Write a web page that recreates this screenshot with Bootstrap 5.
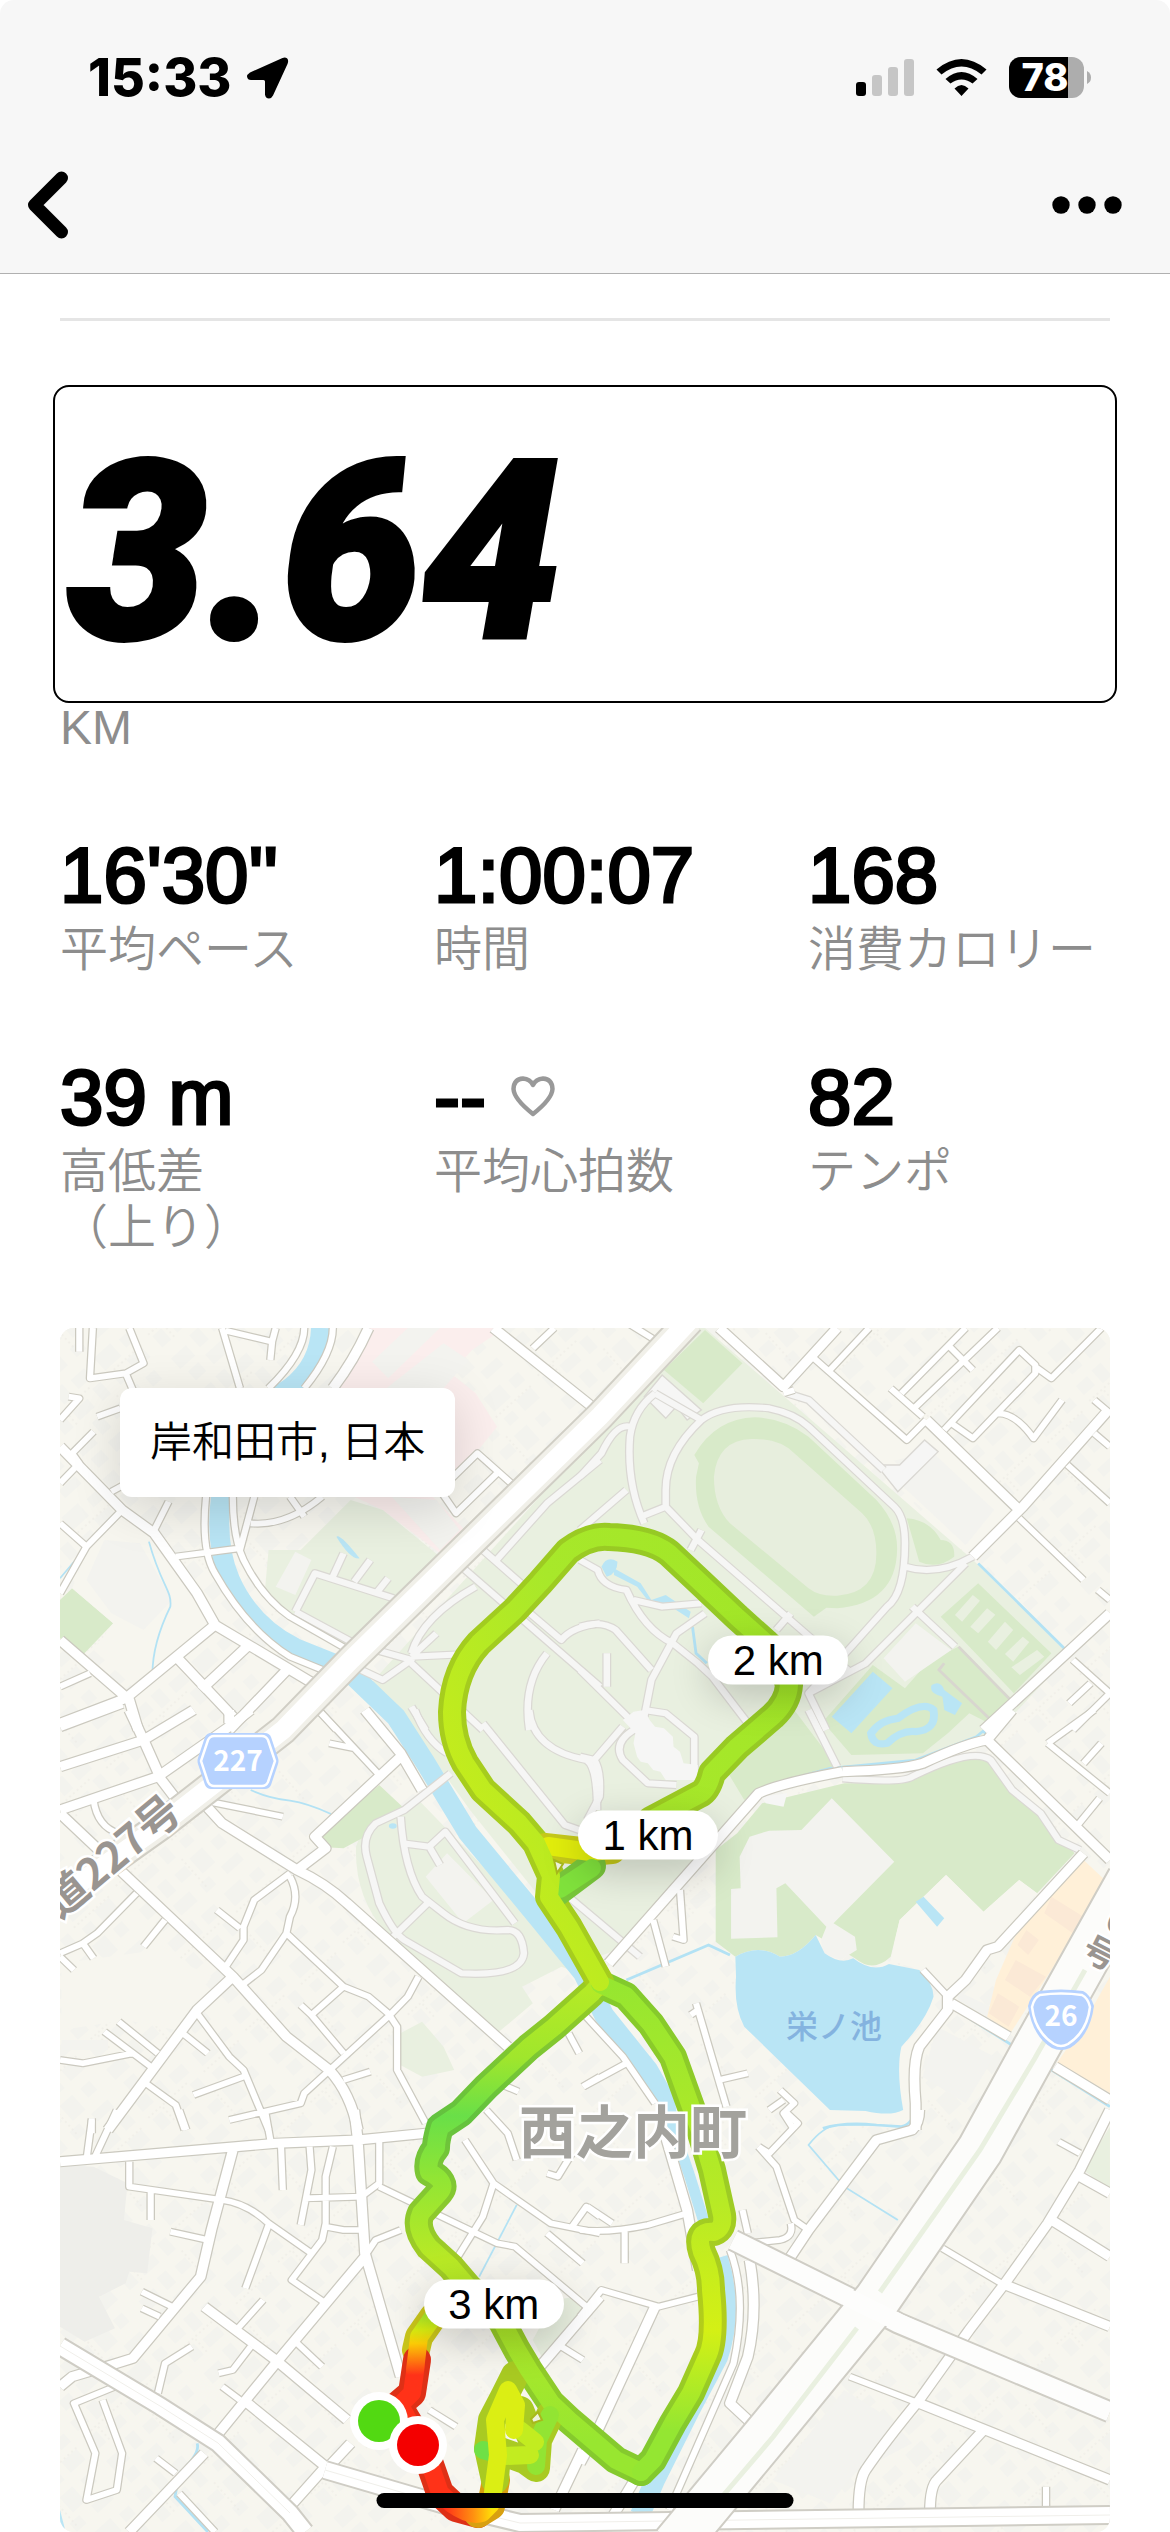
<!DOCTYPE html>
<html lang="ja">
<head>
<meta charset="utf-8">
<meta name="viewport" content="width=device-width, initial-scale=1">
<title>3.64 KM</title>
<link rel="stylesheet" href="https://cdn.jsdelivr.net/npm/bootstrap@5.3.0/dist/css/bootstrap.min.css">
<style>
  body { font-family: "Liberation Sans", "Noto Sans CJK JP", sans-serif; color: #000; background: #fff; }
  svg { display: block; }
  .app-header { background: #f7f7f7; border-bottom: 1px solid #b0b0b0; border-radius: 14px 14px 0 0; }
  .status-bar { padding: 50px 78px 31px 88px; font-family: Inter, sans-serif; font-weight: 800; }
  .clock { font-size: 52px; line-height: 56px; }
  .toolbar { height: 136px; padding: 0 47px 0 24px; }
  .tool-btn { border: 0; background: none; color: #000; padding: 0; }
  .sheet { padding: 44px 60px 0; }
  .rule { height: 3px; background: #e5e5e5; margin-bottom: 64px; }
  .distance-box { margin: 0 -7px; border: 2px solid #000; border-radius: 16px; padding: 18px 12px 0; }
  .distance { font-family: Roboto, sans-serif; font-weight: 900; font-style: italic; font-size: 250px; line-height: 296px; -webkit-text-stroke: 4px #000; }
  .unit { font-size: 48px; line-height: 50px; margin-bottom: 78px; color: #8d8d8d; }
  .stats { --bs-gutter-x: 72px; --bs-gutter-y: 0; row-gap: 75px; margin-bottom: 72px; }
  .value { font-size: 78px; line-height: 88px; margin-bottom: 3px; -webkit-text-stroke: 3px #000; }
  .caption { font-size: 48px; line-height: 56px; font-weight: 350; color: #8d8d8d; }
  .map { border-radius: 14px; overflow: hidden; background: #f7f6ef; }
  .place { left: 60px; top: 60px; background: #fff; border-radius: 12px; padding: 0 30px; font-size: 42px; line-height: 109px; font-weight: 350; box-shadow: 0 12px 50px rgba(0,0,0,.14); }
  .km-pin { width: 140px; border-radius: 25px; background: #fff; font-size: 42px; line-height: 49px; text-align: center; transform: translate(-50%,-50%); box-shadow: 0 12px 40px rgba(0,0,0,.2); }
  .pin-1 { left: 56%; top: 42.1%; }
  .pin-2 { left: 68.4%; top: 27.6%; }
  .pin-3 { left: 41.3%; top: 81.1%; }
  .home-bar { width: 36%; max-width: 417px; height: 15px; bottom: 24px; border-radius: 8px; background: #000; }

  .casing { --road: #cbc9bf; --walk: #dad8d3; --minor-w: 24px; --medium-w: 34px; --walk-w: 25px; }
  .surface { --road: #fff; --walk: #f6f6f5; --minor-w: 17px; --medium-w: 27px; --walk-w: 18px; }
  .tile path { fill: none; stroke-linejoin: round; }
  .tile .minor { stroke: var(--road); stroke-width: var(--minor-w); }
  .tile .medium { stroke: var(--road); stroke-width: var(--medium-w); }
  .tile .walk { stroke: var(--walk); stroke-width: var(--walk-w); }
  .park { fill: #e9f0e0; }
  .field { fill: #d8eac9; }
  .lake { fill: #b9e5f5; }
  .block { fill: #f3f3ef; }
  .stream { fill: none; stroke: #b3e2f4; stroke-width: 5px; }
  .canal { stroke-width: 8px; }
  .run { fill: none; stroke-linecap: round; stroke-linejoin: round; }
  .edge { stroke-width: 28px; }
  .core { stroke-width: 18px; }
  .map text { font-family: "Noto Sans CJK JP", sans-serif; font-weight: 700; text-anchor: middle; paint-order: stroke; }
  .map .lake-name { font-weight: 500; }
</style>
<script src="https://cdn.jsdelivr.net/npm/bootstrap@5.3.0/dist/js/bootstrap.bundle.min.js"></script>
</head>
<body>
<header class="app-header">
  <div class="status-bar d-flex align-items-center justify-content-between">
    <div class="d-flex align-items-center">
      <span class="clock">15:33</span>
      <svg class="ms-3" width="42" height="42" viewBox="0 0 42 42" aria-hidden="true"><path d="M35.500 1L3 15.500Q0 17.500 0 19.500Q.5 23 4 23H16.500Q18 23 18 24.500V37.500Q18.500 41.500 22 41.500Q24.500 41.500 26 38.500L40.500 7Q42 3 40 1.200Q38 -.2 35.500 1Z"/></svg>
    </div>
    <div class="d-flex align-items-center">
      <svg width="236" height="42" viewBox="856 57 236 42" role="img" aria-label="電波 Wi-Fi バッテリー 78%">
        <g fill="#c6c6c6"><rect x="872" y="75" width="10" height="21" rx="3"/><rect x="888" y="67" width="10" height="29" rx="3"/><rect x="904" y="59" width="10" height="37" rx="3"/></g>
        <rect x="856" y="82" width="10" height="14" rx="3"/>
        <path d="M936.500 69.500Q961.500 48.500 986.500 69.500L981.500 74.500Q961.500 58.500 941.500 74.500ZM945.500 79Q961.500 65 977.500 79L972.500 83.500Q961.500 75.500 950.500 83.500ZM954.500 88.500Q961.500 81.500 968.500 88.500L961.500 96Z"/>
        <rect x="1009" y="57" width="75" height="41" rx="12" fill="#adadad"/>
        <path d="M1068 57h-47a12 12 0 0 0-12 12v17a12 12 0 0 0 12 12h47z"/>
        <path d="M1087 71Q1091 73 1091 77.500T1087 84Z" fill="#adadad"/>
        <text x="1045" y="91" font-size="38" font-weight="800" fill="#fff" text-anchor="middle">78</text>
      </svg>
    </div>
  </div>
  <nav class="toolbar d-flex align-items-center justify-content-between">
    <button class="tool-btn" type="button" aria-label="戻る"><svg width="48" height="70" viewBox="0 0 48 70"><path d="M37.500 8L10.500 35L37.500 62" fill="none" stroke="#000" stroke-width="13" stroke-linecap="round" stroke-linejoin="round"/></svg></button>
    <button class="tool-btn" type="button" aria-label="メニュー"><svg width="72" height="20" viewBox="0 0 72 20"><circle cx="10" cy="10" r="8.700"/><circle cx="36" cy="10" r="8.700"/><circle cx="62" cy="10" r="8.700"/></svg></button>
  </nav>
</header>

<main class="sheet">
  <div class="rule"></div>
  <div class="distance-box"><div class="distance">3.64</div></div>
  <div class="unit">KM</div>

  <div class="row stats">
    <div class="col-4"><div class="value">16'30''</div><div class="caption">平均ペース</div></div>
    <div class="col-4"><div class="value">1:00:07</div><div class="caption">時間</div></div>
    <div class="col-4"><div class="value">168</div><div class="caption text-nowrap">消費カロリー</div></div>
    <div class="col-4"><div class="value">39 m</div><div class="caption">高低差<br>（上り）</div></div>
    <div class="col-4">
      <div class="value d-flex align-items-center">--<svg class="ms-4" width="46" height="44" viewBox="0 0 46 44" aria-hidden="true"><path d="M23 39Q4 24 3.500 14Q4 4 13 3.500Q20 4 23 10Q26 4 33 3.500Q42 4 42.500 14Q42 24 23 39Z" fill="none" stroke="#999" stroke-width="4.500" stroke-linejoin="round"/></svg></div>
      <div class="caption">平均心拍数</div>
    </div>
    <div class="col-4"><div class="value">82</div><div class="caption">テンポ</div></div>
  </div>

  <div class="map position-relative">
    <svg viewBox="60 1328 1050 1204" width="100%" role="img" aria-label="ルートマップ">
      <defs>
        <pattern id="houses" width="131" height="97" patternUnits="userSpaceOnUse" patternTransform="rotate(-42)">
          <path d="M3 4h15v12h-15zM25 3h12v17h-12zM46 6h18v12h-18zM5 28h12v15h-12zM26 31h20v11h-20zM56 27h11v16h-11zM78 5h22v17h-22zM109 8h13v11h-13zM80 33h12v10h-12zM101 28h20v14h-20zM4 57h20v14h-20zM33 52h12v16h-12zM54 55h14v11h-14zM76 53h17v20h-17zM103 54h12v12h-12zM8 78h14v12h-14zM32 77h22v13h-22zM66 79h13v11h-13zM94 80h22v10h-22z" fill="#f3f3ee"/>
          <path d="M3 24h55M21 26v18M70 48v40M75 27h50" stroke="#eceae4" stroke-dasharray="2 3"/>
        </pattern>
        <linearGradient id="g-loop" gradientUnits="userSpaceOnUse" x1="440" y1="1760" x2="760" y2="1600"><stop offset="0" stop-color="#c4ec1c"/><stop offset=".5" stop-color="#a8e82a"/><stop offset="1" stop-color="#a2e628"/></linearGradient>
        <linearGradient id="g-loop-e" gradientUnits="userSpaceOnUse" x1="440" y1="1760" x2="760" y2="1600"><stop offset="0" stop-color="#a8cd1d"/><stop offset="1" stop-color="#92c926"/></linearGradient>
        <linearGradient id="g-west" gradientUnits="userSpaceOnUse" x1="0" y1="1990" x2="0" y2="2440"><stop offset="0" stop-color="#b4ea26"/><stop offset=".15" stop-color="#a0e62c"/><stop offset=".28" stop-color="#69df48"/><stop offset=".42" stop-color="#92e534"/><stop offset=".6" stop-color="#b9e925"/><stop offset="1" stop-color="#98e630"/></linearGradient>
        <linearGradient id="g-west-e" gradientUnits="userSpaceOnUse" x1="0" y1="1990" x2="0" y2="2440"><stop offset="0" stop-color="#99cb24"/><stop offset=".28" stop-color="#62c23f"/><stop offset=".6" stop-color="#a2cc24"/><stop offset="1" stop-color="#85ca2d"/></linearGradient>
        <linearGradient id="g-east" gradientUnits="userSpaceOnUse" x1="0" y1="1980" x2="0" y2="2480"><stop offset="0" stop-color="#96e630"/><stop offset=".45" stop-color="#b8ea25"/><stop offset=".7" stop-color="#d4f015"/><stop offset=".9" stop-color="#94e632"/><stop offset="1" stop-color="#94e632"/></linearGradient>
        <linearGradient id="g-east-e" gradientUnits="userSpaceOnUse" x1="0" y1="1980" x2="0" y2="2480"><stop offset="0" stop-color="#82ca2c"/><stop offset=".45" stop-color="#9fcc24"/><stop offset=".7" stop-color="#b4cd1a"/><stop offset=".9" stop-color="#82c92e"/></linearGradient>
        <linearGradient id="g-hot" gradientUnits="userSpaceOnUse" x1="0" y1="2305" x2="0" y2="2375"><stop offset="0" stop-color="#86e339"/><stop offset=".35" stop-color="#d8ef12"/><stop offset=".55" stop-color="#ffcf06"/><stop offset="1" stop-color="#ff3218"/></linearGradient>
        <linearGradient id="g-foot" gradientUnits="userSpaceOnUse" x1="445" y1="0" x2="492" y2="0"><stop offset="0" stop-color="#ff3218"/><stop offset=".6" stop-color="#ff9010"/><stop offset="1" stop-color="#ffdd08"/></linearGradient>

        <g id="roads" class="tile">
          <g transform="translate(40 1310) scale(.3571 .3333)">
            <path class="minor" d="M110 54V125M148 54L140 205L240 190L290 160L250 54M240 190L260 240M510 54L560 235M520 62L650 95L660 54M650 95L645 150M740 54Q740 130 640 235M820 54Q820 130 740 235M56 330L110 265L80 260M160 320L225 295M56 520L110 460L90 430L150 365M200 545L260 510M230 600L130 710L56 850M56 640L130 710M320 660L360 575M380 740L560 715M465 560Q450 720 490 790Q580 960 700 1040L860 1110M540 560Q540 680 570 750Q620 860 700 920L880 1030M590 640Q690 650 790 560M600 560L560 720M700 560L740 620M56 1130L140 1090M1330 530L1225 430L1120 540L1165 610L1280 490M770 1190L830 1260M1380 115L1440 54"/>
            <path class="medium" d="M920 54Q880 150 820 235M56 410L230 600L320 670L440 850L490 945L780 1130M490 945L240 1165L56 1240M56 990L250 1170L275 1260M390 1050L540 1220M590 1000L450 1140M700 1070L530 1260M1270 54L1540 285"/>
          </g>
          <g transform="translate(580 1310) scale(.3571 .3333)">
            <path class="minor" d="M600 240L570 250M650 140L915 390L970 330M700 180L810 54M870 235L960 320M900 250L1080 54M940 290L1170 54M1035 110L1100 180M1020 360L1230 120L1275 165V190L1100 385L1040 340M1275 170L1320 205L1460 54M1170 310Q1220 310 1270 385L1350 270M1440 270L1484 310M1230 625L1410 810M1365 465L1484 580M1440 370L1484 410M1450 840L1484 870M1380 1050L1484 1150M1370 1180L1430 1120M1484 1150L1380 1260M120 30L210 90"/>
            <path class="medium" d="M390 54L570 230L720 54M970 330L1230 600M1100 740L1240 590L1480 300M1130 1260L1484 910"/>
          </g>
          <g transform="translate(40 1710) scale(.3571 .3333)">
            <path class="minor" d="M150 270Q160 350 220 370M780 0L950 195M810 100L880 115M450 270L680 320M56 730L120 700L160 670L270 550M120 700L150 745M56 740L95 780M350 630L290 710M700 490L600 570L570 650V690L520 770M495 600L560 655M700 500Q730 560 700 620L690 670L620 780L560 830M690 670L850 830L920 860L975 910L1000 950V1080L1080 1240M850 830L760 915L730 885M760 915L850 1030M1060 800L1030 860L980 915L740 1150L730 1180L530 1230M850 1110L925 1085M440 910L530 1040L570 1080L640 1260M430 1155L570 1100M400 970L470 1030M220 935L330 1030M180 965L310 1070M56 1050L120 1060L260 1030M290 1115L380 1185L405 1260M145 1225V1270M1480 970L1510 1030M1520 1130L1568 1100M1240 1100L1340 1145"/>
            <path class="medium" d="M56 50L230 -20M56 170L290 90L430 0M56 300L330 200L530 50L590 0M250 0L290 90L340 210L390 280M530 0V40M910 0L1010 130L1070 240M1010 140L770 380L800 415L720 480M450 270L510 340L720 480Q800 520 860 580L1310 1010M56 310L540 800L690 980L810 1080Q870 1150 890 1260M540 800L440 900L190 1260"/>
          </g>
          <g transform="translate(580 1710) scale(.3571 .3333)">
            <path class="minor" d="M1410 160L1460 100M1310 100L1440 0M1310 100L1484 250M1390 350L1455 265M960 780L1030 860M280 540L290 690L260 680M205 630L240 770M325 880L410 1190M310 915L330 900M390 1110L470 1090M0 900L120 1040L210 1180M10 1130L130 1060M560 1140L600 1180L570 1210L600 1260M530 1200L570 1170"/>
            <path class="medium" d="M735 185Q900 180 960 160Q1080 100 1140 90L1210 0M735 185Q560 220 500 250L80 760M1140 90L1484 450M1410 430L1170 710L1140 720L1080 810L1030 860V900L950 1010Q930 1060 940 1180V1260M1040 880L1200 980M1330 1070L1484 1170"/>
          </g>
          <g transform="translate(40 2110) scale(.3571 .3333)">
            <path class="minor" d="M145 30L130 150M150 150L215 0M250 155V230L510 270Q580 280 640 340L760 430M310 240V330M365 365L470 390M640 345L575 535M285 545L370 590M285 595L335 620M675 110L680 240M755 110L760 180L730 345M820 110L800 200V340L790 390L705 510L800 580M800 350L850 360H900M740 265L900 260L950 220V90M950 230L1280 400L1330 410L1530 590M1190 90L1270 220L1430 340L1568 370M1270 220L1240 320L1170 440M1010 360L940 390L915 430M550 660L625 570M720 700L790 770M590 710L540 780L500 790M510 830L560 870M425 710L350 760L330 850M210 830L95 880L155 1030L130 1170L215 1140L230 1030L175 870M325 1045L380 1090M390 1150L490 1266M1090 900L1165 950M1460 710L1520 750M1420 370L1520 460M630 0L645 90M390 0L410 60M1420 190L1450 200L1490 130M1250 0L1310 70L1335 150M1490 350L1530 290L1568 320"/>
            <path class="medium" d="M56 155L660 100L890 90L1080 70M880 0L890 90L910 430L1010 800M540 120L480 360L450 500L380 590L260 745L200 765L90 800L56 830M910 440L660 760L500 970M460 590L660 750L860 930M570 870L800 1070L700 1190M870 1000L800 1080M460 1030L250 1266M1400 770L1568 560M1520 1020L1440 1200"/>
          </g>
          <g transform="translate(580 2110) scale(.3571 .3333)">
            <path class="minor" d="M0 360Q80 370 190 345L300 310M125 350V460M0 620L60 540L220 590L330 560M20 290L90 340M500 110L530 130L610 40L570 0M590 340Q600 380 560 390L470 400M455 300L470 370M500 110L550 170L600 330L640 360M1340 95L1400 130M1015 415L1180 520M755 800L950 880M1305 1130V1195M420 420Q470 560 430 760L250 1200"/>
            <path class="medium" d="M240 80L300 300L330 480M210 590L50 960L0 1060M590 440L640 360L830 90L930 60Q950 40 950 0M475 450Q500 600 470 740L420 880L480 940M950 880L1484 1110M1484 0L1400 180L1310 340L1190 520L1090 660L950 870Q850 1000 800 1080Q780 1110 780 1210M1400 200L1484 250M1320 330L1484 440M1180 520L1484 650M1130 960L1000 1110Q980 1130 980 1210M80 1240L170 1080"/>
          </g>
        </g>
        <g id="walks" class="tile">
          <g transform="translate(40 1310) scale(.3571 .3333)"><path class="walk" d="M715 905L880 1000M715 905L770 790L990 865M820 800L850 730M880 815L925 750M945 845L975 805M1270 760L1420 580L1568 450M1180 770L1568 1130M1240 720L1400 870M1220 830Q1070 920 1040 1030M900 1080L960 1110L1040 1050L940 1020M1040 1040L1240 1030M1040 1060L1240 1260M1040 1040L1110 970M1568 940Q1490 950 1460 990L1350 890M1420 1030Q1350 1120 1370 1260M1040 1190L1080 1260"/></g>
          <g transform="translate(580 1310) scale(.3571 .3333)"><path class="walk" d="M210 250L340 330Q400 280 530 295Q600 310 640 350L880 590Q910 620 910 700Q910 850 860 890L760 1010L640 1150L690 1260M340 330Q240 430 240 540V590L330 690L750 1080M240 590L170 620M210 250Q150 300 140 380Q130 520 180 640M140 350Q100 340 60 430L0 500M130 540L0 660M910 770Q1000 800 1100 740M1080 760L800 1060L640 1150M930 890L1050 1010M580 250L640 270L850 480M0 950Q60 930 100 960L200 1080M0 750L50 780Q60 830 130 840Q180 960 260 1000L330 1060L370 1100L470 1240M150 870L230 890L340 880M350 910L270 970L200 1110L180 1220M75 1030V1130M0 1080L170 1260M310 720L340 660M550 960L590 910"/></g>
          <g transform="translate(40 1710) scale(.3571 .3333)"><path class="walk" d="M1150 190L1020 300L940 340Q900 380 915 440Q930 500 950 580Q990 670 1020 690L1180 790Q1350 800 1355 730Q1350 660 1310 660Q1200 670 1130 610L1070 560Q1020 480 1010 320M1015 400L1090 410L1135 365L1330 640M1090 410L1120 465M1085 580L980 690M1240 40L1470 345L1510 360M1050 0Q1080 90 1140 130M1370 0Q1380 120 1530 150Q1560 170 1560 300M1480 560L1680 740"/></g>
          <g transform="translate(580 1710) scale(.3571 .3333)"><path class="walk" d="M640 0L720 170M735 205Q900 220 930 200Q1100 110 1150 150L1210 240L1290 310L1340 390L1400 420M0 140L40 150L120 50M40 150Q60 180 55 260L20 330M180 0L240 10L320 80V180M150 60Q90 100 120 150L190 220L270 225"/></g>
        </g>
        <g id="run-loop"><path class="run" d="M600 1982L569 1927L549 1897L551 1876L536 1843L519 1823L483 1790L465 1763Q452 1740 452 1712Q454 1670 479 1643L515 1610L540 1583L568 1551Q590 1535 609 1537Q650 1538 669 1553L701 1583L737 1617L766 1643Q780 1655 784 1668L789 1685Q788 1702 773 1716L737 1747L712 1773Q708 1790 700 1794L651 1820L640 1835"/></g>
        <g id="run-west"><path class="run" d="M600 1984L592 1993L554 2027L529 2047L486 2087L461 2113L440 2127Q436 2140 436 2148Q426 2160 429 2172Q448 2182 440 2192L421 2213Q414 2228 429 2247L451 2267L469 2288L501 2320L517 2350L529 2370L551 2403L569 2420L616 2460L641 2472"/></g>
        <g id="run-east"><path class="run" d="M600 1984L626 1996L651 2024L673 2057L691 2107L701 2133L712 2170L722 2215Q724 2228 714 2232Q695 2230 702 2252Q711 2270 711 2290Q716 2340 707 2357L691 2393L673 2423L653 2460L641 2472"/></g>
      </defs>

      <!-- land use -->
      <rect x="60" y="1328" width="1050" height="1204" fill="#f7f6ef"/>
      <rect x="60" y="1328" width="1050" height="1204" fill="url(#houses)"/>
      <path class="park" d="M705 1328L973 1560L1069 1655L990 1740L912 1765L758 1790L616 1950L590 1960L470 1810L420 1740L365 1690L600 1430L690 1328Z"/>
      <g transform="translate(40 1310) scale(.3571 .3333)">
        <path fill="#fbeeed" d="M920 54H1300L1210 120L1150 190L1220 250L1280 350L1220 430L1100 560L1190 660L1120 730L960 600L880 560L830 235Z"/>
        <path class="block" d="M1030 54H1120L975 205L930 155ZM1130 100L1200 150L1130 235H970ZM985 560L1110 570L1175 660L1120 720Z"/>
        <path class="park" d="M870 570L960 600L1120 740L860 1030L700 920L630 840L640 720L730 720Z"/>
        <path class="field" d="M56 870L90 835L205 940L120 1035L56 985Z"/>
        <path fill="#f7f6ef" d="M130 720L260 630L440 870L470 950L260 1130L150 1020L205 940L90 835Z"/>
        <path class="block" d="M715 725L760 750L715 855L660 830ZM180 690L280 700L370 870L290 960L200 910L130 810Z"/>
        <path class="lake" d="M830 680Q840 670 895 745Q870 750 830 680Z"/>
        <path class="stream" d="M305 695C340 830 370 840 365 890Q315 1000 315 1090M56 805L210 610L230 605"/>
      </g>
      <g transform="translate(580 1310) scale(.3571 .3333)">
        <path fill="#f7f6ef" d="M580 250L660 170L910 400L970 340L1220 610L1100 730L900 540L1000 420L850 460L640 270Z"/>
        <path class="field" d="M350 60L455 160L345 280L235 180Z"/>
        <path class="field" d="M320 435Q380 325 490 322Q570 325 640 380L830 570Q890 640 888 720Q885 880 720 895L690 893L655 920L360 650Q320 590 325 500L333 460Z"/>
        <path fill="#e7eedd" d="M375 500Q385 390 480 387Q560 385 600 430L790 610Q830 650 830 730Q830 850 720 857Q670 860 640 835L420 640Q375 590 375 500Z"/>
        <path class="field" d="M915 625Q980 630 1010 690Q1050 690 1048 740Q1000 780 950 755ZM1115 820L1320 1030L1215 1150L1010 920Z"/>
        <path class="field" d="M820 1065L910 1135L980 1050L1060 1010L1220 1180L1155 1245L1090 1210L1030 1270L960 1330L760 1335L680 1235Z"/>
        <path class="park" d="M1100 855L1120 872L1070 935L1050 915ZM1140 895L1163 914L1115 970L1093 950ZM1190 935L1213 960L1165 1020L1142 995ZM1240 980L1258 996L1213 1055L1190 1032ZM1280 1020L1300 1040L1232 1095L1208 1072Z"/>
        <path class="block" d="M905 530L990 430L1160 600L1080 705ZM940 940L1040 1020L910 1115L850 1045Z"/>
        <path fill="#f6f6f5" stroke="#dad8d3" stroke-width="4" d="M965 390L1003 425L890 545L830 465H895ZM180 260L230 195L340 300L300 330L270 290L240 325Z"/>
        <path class="lake" d="M820 1085L875 1135L760 1270L705 1220ZM985 1125Q1010 1110 1020 1140L1070 1180L1050 1215L1020 1200L1015 1160Q975 1150 985 1125ZM60 770Q75 735 105 755Q105 790 75 800ZM95 775L170 820L200 870L240 855L310 905L305 925L240 880L200 885L160 830L95 795Z"/>
        <path fill="none" stroke="#b9e5f5" stroke-width="22" d="M815 1270Q840 1230 890 1225Q960 1170 990 1200Q1000 1260 940 1265Q900 1260 860 1300Q820 1310 815 1270Z"/>
        <path class="stream canal" d="M310 54L75 320M1115 760L1370 1030L1130 1270M860 985L800 1055M315 950L325 1030L355 1060"/>
        <path fill="none" stroke="#d8d6cf" stroke-width="8" d="M1060 1010L1215 1180M1020 1060L1005 1080L1160 1240"/>
      </g>
      <g transform="translate(40 1710) scale(.3571 .3333)">
        <path class="park" d="M1060 270L1540 800L1460 770L1350 830L1380 880L1280 970L970 670Q880 560 885 410Q900 340 1060 270ZM1000 975L1070 935L1130 1010L1160 1080L1070 1100L1000 1060Z"/>
        <path class="field" d="M950 225L1015 290Q930 330 910 380L850 415L800 412L780 380Z"/>
        <path class="block" d="M1140 430L1270 570L1185 640L1080 500ZM60 990H190V1020H60Z"/>
        <path fill="#f7f6ef" d="M60 760L330 720L480 800L380 960L240 930L60 960Z"/>
        <ellipse class="lake" cx="988" cy="348" rx="11" ry="8"/>
        <path class="stream" d="M590 240Q640 265 700 272Q750 280 815 312"/>
      </g>
      <g transform="translate(580 1710) scale(.3571 .3333)">
        <path class="field" d="M415 190L510 70L600 0L720 170L500 240L460 270ZM380 420V695L435 740Q500 700 560 740Q610 740 660 675L770 745Q820 790 870 740L895 630L1025 495L1130 605L1230 510L1280 550L1385 430L1300 330L1200 220L1140 140Q1090 130 900 220L740 220L510 280L440 370Z"/>
        <path fill="#f7f6ef" d="M895 630L1025 495L1130 605L1230 510L1280 550L1150 700L1030 840L950 780L870 750ZM930 1200L1000 900L700 1240H900Z"/>
        <path class="block" d="M705 265L880 455L710 640L770 680L775 720L730 750L680 730L675 690L690 650L575 520L550 535L553 682L423 686V537L450 535L447 440L475 380L530 362L620 360Z"/>
        <path class="block" d="M1000 950L1160 1040L1080 1180L960 1100ZM1050 840L1150 890L1140 920L1060 870Z"/>
        <path class="lake" d="M435 740Q500 700 560 740Q610 740 660 675L685 730Q730 765 765 745Q820 790 865 762L950 780Q990 820 990 860Q970 930 900 1010Q885 1080 905 1200Q870 1220 800 1203L700 1200L460 950Q430 890 437 800ZM940 575L962 560L1020 625L1000 650Z"/>
        <path fill="#fff0d8" d="M1410 450L1470 510L1320 780L1205 970L1140 920L1165 810L1230 650ZM1484 800L1400 960L1335 1060L1484 1150Z"/>
        <path fill="#fbe9d6" d="M1320 560L1410 620L1380 670L1300 610ZM1250 660L1285 690L1255 735L1225 705ZM1220 750L1305 800L1260 860L1190 810ZM1170 850L1230 890L1200 950L1145 910Z"/>
        <path class="stream canal" d="M105 720L490 245Q560 215 700 175L940 150L1110 80L1200 0M130 810L360 705L420 735M1060 905L1484 1190M680 1255Q740 1235 830 1245L900 1250Q940 1240 935 1180"/>
      </g>
      <g transform="translate(40 2110) scale(.3571 .3333)">
        <path fill="#eeeeea" d="M56 165L150 170L245 220L235 330L315 355L300 490L250 485L240 520L165 560L210 655L125 695L56 650Z"/>
        <path class="park" d="M1440 570L1500 560L1520 600L1410 750L1380 690Z"/>
        <path class="stream" d="M1335 285L1230 500"/>
        <path class="stream canal" d="M440 1000Q450 1030 390 1090L378 1160L470 1266"/>
        <path class="lake" d="M56 1200L72 1266H56Z"/>
      </g>
      <g transform="translate(580 2110) scale(.3571 .3333)">
        <path class="block" d="M740 840L860 920L930 1000L770 1090L700 1180L540 1110Z"/>
        <path class="park" d="M1484 50L1410 180L1484 240Z"/>
        <path class="stream" d="M830 45H720Q680 50 640 105L740 230L890 330"/>
      </g>

      <!-- river -->
      <g fill="none" stroke="#b9e5f5" stroke-width="20">
        <path d="M321 1328Q320 1365 290 1388Q225 1430 221 1497Q215 1545 230 1580Q250 1625 295 1648L345 1668L396 1717L425 1762L468 1833L540 1920L583 1973L604 2015L648 2070L668 2105"/>
        <path stroke-width="11" d="M668 2090L673 2127L690 2177L708 2235"/>
        <path d="M718 2258Q734 2310 718 2357L690 2410L655 2480L640 2515"/>
      </g>

      <g class="casing"><use href="#walks"/></g><g class="surface"><use href="#walks"/></g>
      <path fill="#f6f6f5" transform="translate(580 1710) scale(.3571 .3333)" d="M120 30L150 5L180 0L195 30L210 50L235 55L260 80L262 110L280 125L290 160L330 165V210H240L225 185L205 180L190 160L170 155L160 140L150 100L155 70ZM510 260L580 250L570 290L520 280Z"/>
      <g class="casing"><use href="#roads"/></g><g class="surface"><use href="#roads"/></g>

      <!-- arterial roads and railway -->
      <g fill="none">
        <path stroke="#d0cec5" stroke-width="31" d="M690 1320L600 1416L351 1660L283 1730L160 1826L60 1897"/>
        <path stroke="#f1f0e9" stroke-width="27" d="M690 1320L600 1416L351 1660L283 1730L160 1826L60 1897"/>
        <path stroke="#fff" stroke-width="19" d="M690 1320L600 1416L351 1660L283 1730L160 1826L60 1897"/>
        <path stroke="#cfcdc5" stroke-width="20" d="M60 2346L160 2406L218 2443L290 2513L305 2532M325 2470L445 2505L520 2523L1110 2515"/>
        <path stroke="#fff" stroke-width="16" d="M60 2346L160 2406L218 2443L290 2513L305 2532M325 2470L445 2505L520 2523L1110 2515"/>
        <path stroke="#f0efea" d="M60 2346L160 2406L218 2443L290 2513M325 2470L445 2505L520 2523L1110 2515"/>
        <path stroke="#cfcdc5" stroke-width="23" d="M733 2240L848 2297L898 2323L1110 2412"/>
        <path stroke="#fdfdfc" stroke-width="19" d="M733 2240L848 2297L898 2323L1110 2412"/>
        <path stroke="#cfcdc5" stroke-width="49" d="M1130 1880L1035 2050L980 2150L877 2300L773 2427L675 2545"/>
        <path stroke="#fcfcfa" stroke-width="45" d="M1130 1880L1035 2050L980 2150L877 2300L773 2427L675 2545"/>
        <path stroke="#e9f0e0" stroke-width="5" d="M1085 1970L1035 2058L980 2150L880 2292M857 2328L773 2437L715 2505"/>
        <path stroke="#fdfdfc" stroke-width="18" d="M845 2296L910 2328"/>
      </g>

      <!-- run -->
      <g class="edge">
        <g stroke="url(#g-west-e)"><use href="#run-west"/></g>
        <g stroke="url(#g-east-e)"><use href="#run-east"/></g>
        <g stroke="url(#g-loop-e)"><use href="#run-loop"/></g>
        <path class="run" stroke="#c5c91a" d="M545 1847L590 1852L612 1850"/>
        <path class="run" stroke="#78c63a" d="M556 1893L592 1866"/>
        <path class="run" stroke="#c9c51a" d="M433 2317L419 2337L416 2350"/>
        <path class="run" stroke="#de3016" d="M417 2360L412 2393L398 2405L425 2450L440 2493L456 2508L478 2514"/>
        <path class="run" stroke="#d8a010" d="M478 2514L491 2506L496 2480"/>
        <path class="run" stroke="#a9ca22" d="M515 2375L505 2395L492 2420L488 2448L495 2480L497 2450L525 2460L536 2468L538 2440L550 2415M520 2410L530 2435"/>
      </g>
      <g class="core">
        <g stroke="url(#g-west)"><use href="#run-west"/></g>
        <g stroke="url(#g-east)"><use href="#run-east"/></g>
        <path class="run" stroke="#e2ee0c" d="M548 1846L590 1852L612 1850"/>
        <path class="run" stroke="#80e23c" d="M560 1889L592 1868"/>
        <g stroke="url(#g-loop)"><use href="#run-loop"/></g>
        <path class="run" stroke="#ff3218" d="M416 2365L412 2393L400 2405L425 2450L440 2493L452 2504"/>
        <path class="run" stroke="url(#g-hot)" d="M433 2317L419 2337L415 2370"/>
        <path class="run" stroke="url(#g-foot)" d="M452 2504Q470 2517 482 2513L491 2504"/>
        <path class="run" stroke="#92e433" d="M536 2466L538 2440L550 2415"/>
        <path class="run" stroke="#c2ec20" d="M505 2456L530 2455M520 2430L535 2442"/>
        <path class="run" stroke="#6fe046" d="M483 2450L490 2452"/>
        <path class="run" stroke="#dbee14" d="M492 2500L498 2455L495 2420L508 2390L516 2405L514 2430"/>
      </g>
      <path d="M554 1860L563 1864L557 1873ZM531 2419L538 2412L542 2420L533 2423Z" fill="#eef3df" stroke="#a8b91c" stroke-width="2"/>

      <!-- place labels -->
      <text transform="translate(122 1868) rotate(-40)" font-size="43" fill="#9a9591" stroke="#fff" stroke-width="5">道227号</text>
      <text transform="translate(1095 1964) rotate(27)" font-size="34" fill="#9a9591" stroke="#fff" stroke-width="5">号</text>
      <text transform="translate(1112 1932) rotate(27)" font-size="34" fill="#9a9591" stroke="#fff" stroke-width="5">6</text>
      <text x="633" y="2153" font-size="57" fill="#a3a29d" stroke="#fff" stroke-width="5">西之内町</text>
      <text class="lake-name" x="834" y="2038" font-size="32" fill="#84b3df">栄ノ池</text>
      <path d="M211 1733H265Q269 1733 271 1737L278 1758Q279 1761 278 1764L271 1785Q269 1789 265 1789H211Q207 1789 205 1785L198 1764Q197 1761 198 1758L205 1737Q207 1733 211 1733Z" fill="#b6d2ff"/>
      <path d="M214 1736H262Q266 1736 268 1740L275 1761L268 1782Q266 1786 262 1786H214Q210 1786 208 1782L201 1761L208 1740Q210 1736 214 1736Z" fill="none" stroke="#fff" stroke-width="2.500"/>
      <text x="238" y="1771" font-size="28" fill="#fff">227</text>
      <path d="M1039 1991Q1061 1988 1083 1991Q1090 1994 1094 2006Q1090 2036 1070 2048Q1061 2052 1052 2048Q1032 2036 1028 2006Q1031 1994 1039 1991Z" fill="#b6d2ff"/>
      <path d="M1040 1995Q1061 1992 1082 1995Q1088 1998 1090 2007Q1087 2032 1068 2044Q1061 2048 1054 2044Q1035 2032 1032 2007Q1034 1998 1040 1995Z" fill="none" stroke="#fff" stroke-width="2.500"/>
      <text x="1061" y="2026" font-size="28" fill="#fff">26</text>

      <!-- start and finish -->
      <circle cx="379" cy="2421" r="29" fill="#fff"/><circle cx="379" cy="2421" r="21" fill="#52d912"/>
      <circle cx="418" cy="2445" r="29" fill="#fff"/><circle cx="418" cy="2445" r="21" fill="#f40000"/>
    </svg>
    <div class="place position-absolute text-nowrap">岸和田市, 日本</div>
    <div class="km-pin pin-1 position-absolute">1 km</div>
    <div class="km-pin pin-2 position-absolute">2 km</div>
    <div class="km-pin pin-3 position-absolute">3 km</div>
  </div>
</main>
<div class="home-bar position-fixed start-50 translate-middle-x"></div>
</body>
</html>
